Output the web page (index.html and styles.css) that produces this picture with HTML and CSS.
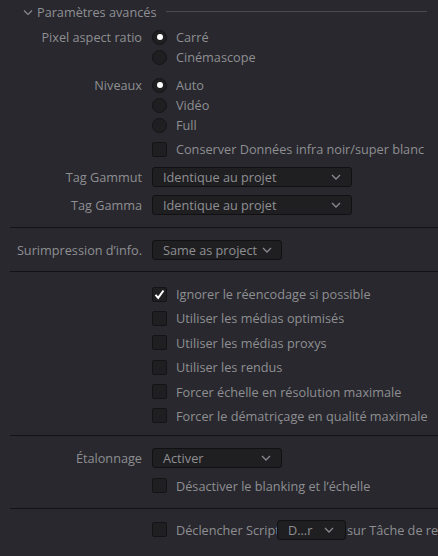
FILE: index.html
```html
<!DOCTYPE html>
<html lang="fr">
<head>
<meta charset="utf-8">
<link rel="stylesheet" href="styles.css">
</head>
<body>
<div class="panel">
  <div class="header">
    <svg class="hchev" width="10" height="7" viewBox="0 0 10 7"><path d="M1 1.5 L5 5.5 L9 1.5" fill="none" stroke="#8a8a8e" stroke-width="1.2"/></svg>
    <span class="htitle">Paramètres avancés</span>
    <span class="hline"></span>
  </div>

  <div class="group g-par">
    <div class="row"><span class="label">Pixel aspect ratio</span><span class="ctl"><span class="radio on"></span><span class="opt">Carré</span></span></div>
    <div class="row"><span class="label"></span><span class="ctl"><span class="radio"></span><span class="opt">Cinémascope</span></span></div>
  </div>

  <div class="group g-niv">
    <div class="row"><span class="label">Niveaux</span><span class="ctl"><span class="radio on"></span><span class="opt">Auto</span></span></div>
    <div class="row"><span class="label"></span><span class="ctl"><span class="radio"></span><span class="opt">Vidéo</span></span></div>
    <div class="row"><span class="label"></span><span class="ctl"><span class="radio"></span><span class="opt">Full</span></span></div>
    <div class="row r-cons"><span class="label"></span><span class="ctl"><span class="check"></span><span class="opt">Conserver Données infra noir/super blanc</span></span></div>
  </div>

  <div class="row r-tag"><span class="label">Tag Gammut</span><span class="ctl"><span class="select s-wide"><span class="stext">Identique au projet</span><svg class="chev" width="10" height="6" viewBox="0 0 10 6"><path d="M1 1 L5 5 L9 1" fill="none" stroke="#8a8a8e" stroke-width="1.3"/></svg></span></span></div>
  <div class="row r-tag"><span class="label">Tag Gamma</span><span class="ctl"><span class="select s-wide"><span class="stext">Identique au projet</span><svg class="chev" width="10" height="6" viewBox="0 0 10 6"><path d="M1 1 L5 5 L9 1" fill="none" stroke="#8a8a8e" stroke-width="1.3"/></svg></span></span></div>

  <div class="sep s1"></div>

  <div class="row r-sur"><span class="label">Surimpression d’info.</span><span class="ctl"><span class="select s-mid"><span class="stext">Same as project</span><svg class="chev" width="10" height="6" viewBox="0 0 10 6"><path d="M1 1 L5 5 L9 1" fill="none" stroke="#8a8a8e" stroke-width="1.3"/></svg></span></span></div>

  <div class="sep s2"></div>

  <div class="checks">
    <div class="row"><span class="label"></span><span class="ctl"><span class="check on"><svg width="13" height="13" viewBox="0 0 13 13"><path d="M2.5 6.8 L5.2 9.8 L10.5 2.5" fill="none" stroke="#ffffff" stroke-width="2"/></svg></span><span class="opt">Ignorer le réencodage si possible</span></span></div>
    <div class="row"><span class="label"></span><span class="ctl"><span class="check"></span><span class="opt">Utiliser les médias optimisés</span></span></div>
    <div class="row"><span class="label"></span><span class="ctl"><span class="check"></span><span class="opt">Utiliser les médias proxys</span></span></div>
    <div class="row"><span class="label"></span><span class="ctl"><span class="check"></span><span class="opt">Utiliser les rendus</span></span></div>
    <div class="row"><span class="label"></span><span class="ctl"><span class="check"></span><span class="opt">Forcer échelle en résolution maximale</span></span></div>
    <div class="row"><span class="label"></span><span class="ctl"><span class="check"></span><span class="opt">Forcer le dématriçage en qualité maximale</span></span></div>
  </div>

  <div class="sep s3"></div>

  <div class="row r-eta"><span class="label">Étalonnage</span><span class="ctl"><span class="select s-mid s-spread"><span class="stext">Activer</span><svg class="chev" width="10" height="6" viewBox="0 0 10 6"><path d="M1 1 L5 5 L9 1" fill="none" stroke="#8a8a8e" stroke-width="1.3"/></svg></span></span></div>
  <div class="row r-des"><span class="label"></span><span class="ctl"><span class="check"></span><span class="opt">Désactiver le blanking et l’échelle</span></span></div>

  <div class="sep s4"></div>

  <div class="row r-scr"><span class="label"></span><span class="ctl"><span class="check"></span><span class="opt clip">Déclencher Script</span><span class="select s-small"><span class="stext">D...r</span><svg class="chev" width="10" height="6" viewBox="0 0 10 6"><path d="M1 1 L5 5 L9 1" fill="none" stroke="#8a8a8e" stroke-width="1.3"/></svg></span><span class="opt after">sur Tâche de re</span></span></div>
</div>
</body>
</html>
```

FILE: styles.css
```css
html, body {
  margin: 0;
  padding: 0;
  background: #28282e;
  overflow: hidden;
}
body {
  width: 438px;
  height: 556px;
  font-family: "Open Sans", "Noto Sans", sans-serif;
  font-size: 12.7px;
  color: #8f8f92;
}
.panel {
  display: flex;
  flex-direction: column;
}
.header {
  height: 24px;
  display: flex;
  align-items: center;
  padding-left: 23px;
  white-space: nowrap;
}
.hchev {
  flex: none;
  margin-top: 1px;
}
.htitle {
  margin-left: 4px;
  color: #909094;
}
.hline {
  flex: 1;
  height: 1px;
  background: #4a4a50;
  margin-left: 10px;
  margin-right: 11px;
  margin-top: -1px;
}
.row {
  display: grid;
  grid-template-columns: 142px auto;
  column-gap: 10px;
  height: 20px;
  align-items: center;
  white-space: nowrap;
}
.label {
  text-align: right;
}
.ctl {
  display: flex;
  align-items: center;
  min-width: 0;
}
.opt {
  margin-left: 9px;
}
.radio {
  width: 15px;
  height: 15px;
  box-sizing: border-box;
  border-radius: 50%;
  background: #1f1f22;
  border: 1px solid #151517;
  display: flex;
  align-items: center;
  justify-content: center;
  flex: none;
}
.radio.on::after {
  content: "";
  width: 6px;
  height: 6px;
  border-radius: 50%;
  background: #ffffff;
}
.check {
  width: 15px;
  height: 15px;
  box-sizing: border-box;
  border-radius: 2px;
  background: #1f1f22;
  border: 1px solid #141416;
  display: flex;
  align-items: center;
  justify-content: center;
  flex: none;
}
.g-par {
  margin-top: 3px;
}
.g-niv {
  margin-top: 8px;
}
.r-cons {
  margin-top: 4px;
}
.r-tag {
  margin-top: 8px;
}
.select {
  height: 20px;
  box-sizing: border-box;
  background: #1f1f22;
  border: 1px solid #111113;
  border-radius: 3px;
  display: flex;
  align-items: center;
  padding-left: 10px;
  flex: none;
}
.stext {
  flex: none;
}
.chev {
  flex: none;
}
.s-wide {
  width: 200px;
  justify-content: space-between;
  padding-right: 10px;
}
.s-mid {
  width: 130px;
  padding-right: 10px;
}
.s-mid .chev {
  margin-left: 5px;
}
.s-spread {
  justify-content: space-between;
}
.s-small {
  width: 69px;
  justify-content: space-between;
  padding-right: 11px;
}
.sep {
  height: 1px;
  background: #131315;
  margin-left: 10px;
}
.s1 { margin-top: 12px; }
.r-sur { margin-top: 12px; }
.s2 { margin-top: 11px; }
.checks {
  margin-top: 12px;
  display: flex;
  flex-direction: column;
  row-gap: 4.4px;
}
.s3 { margin-top: 9px; }
.r-eta { margin-top: 12px; }
.r-des { margin-top: 8px; }
.s4 { margin-top: 12px; }
.r-scr { margin-top: 11px; }
.clip {
  width: 101px;
  overflow: hidden;
  flex: none;
}
.opt.clip {
  margin-left: 9px;
}
.after {
  margin-left: 1px;
}
```
